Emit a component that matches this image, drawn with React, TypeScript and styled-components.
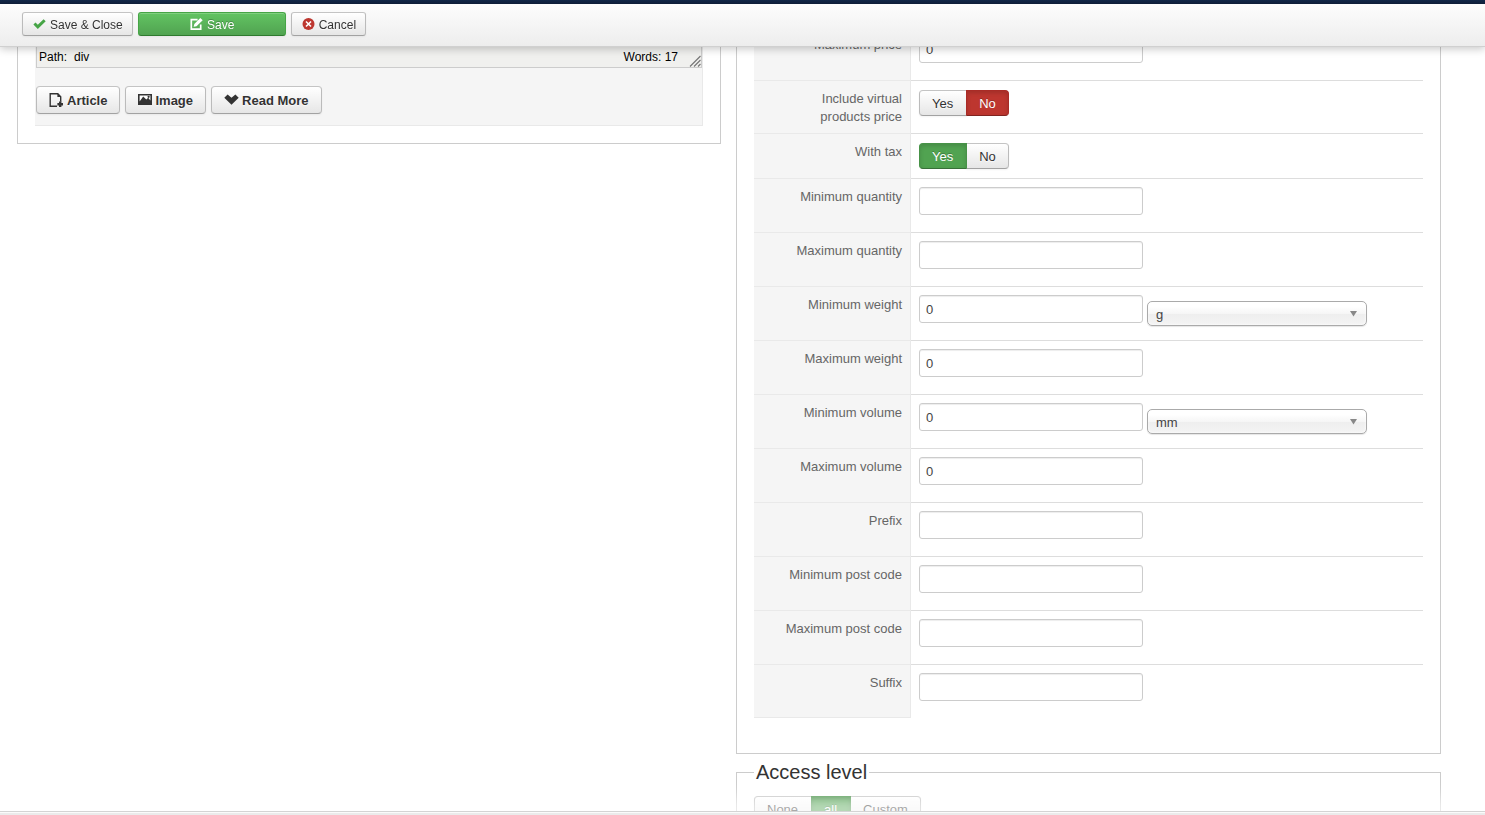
import React, { useState } from "react";
import styled, { createGlobalStyle, css } from "styled-components";

const GlobalStyle = createGlobalStyle`
  *, *::before, *::after { box-sizing: border-box; }
  body {
    margin: 0;
    background: #fff;
    color: #333;
    font: 13px/18px "Helvetica Neue", "Liberation Sans", Arial, sans-serif;
  }
  button, input, select { font: inherit; color: inherit; margin: 0; }
`;

const Shell = styled.div`
  height: 100vh;
  overflow: hidden;
`;

const Header = styled.header`
  position: fixed;
  top: 0;
  left: 0;
  right: 0;
  z-index: 2;
`;

const NavStrip = styled.div`
  height: 4px;
  background: linear-gradient(#13294a, #10203c);
`;

const Toolbar = styled.div`
  display: flex;
  gap: 5px;
  padding: 8px 22px 10px;
  background: linear-gradient(#fdfdfd, #ededed);
  border-bottom: 1px solid #d0d0d0;
  box-shadow: 0 2px 8px rgba(0, 0, 0, 0.22);
`;

const buttonFace = css`
  border: 1px solid #bbb;
  border-color: #c4c4c4 #bbb #a2a2a2;
  border-radius: 4px;
  background: linear-gradient(#fff, #e6e6e6);
  box-shadow: inset 0 1px 0 rgba(255, 255, 255, 0.2), 0 1px 2px rgba(0, 0, 0, 0.05);
  text-shadow: 0 1px 1px rgba(255, 255, 255, 0.75);
`;

const ToolButton = styled.button<{ $primary?: boolean }>`
  ${buttonFace}
  display: flex;
  align-items: center;
  justify-content: center;
  gap: 4px;
  height: 24px;
  padding: 1px 9px 0 10px;
  border-radius: 3px;
  font-size: 12px;
  ${(p) =>
    p.$primary &&
    css`
      width: 148px;
      color: #fff;
      border-color: #46a546 #46a546 #2f7a2f;
      background: linear-gradient(#62c462, #51a351);
      text-shadow: 0 -1px 0 rgba(0, 0, 0, 0.25);
    `}
`;

const EditorButton = styled.button`
  ${buttonFace}
  display: flex;
  align-items: center;
  gap: 3px;
  height: 28px;
  padding: 1px 12px 0;
  font-weight: bold;
`;

const Columns = styled.main`
  display: grid;
  grid-template-columns: minmax(0, 704fr) minmax(0, 705fr);
  align-items: start;
  gap: 15px;
  padding: 4px 44px 0 17px;
`;

const EditorBox = styled.section`
  padding: 42px 17px 17px;
  border: 1px solid #ccc;
  border-top: 0;
`;

const EditorPanel = styled.div`
  background: #f5f5f5;
  border-right: 1px solid #e9e9e9;
  border-bottom: 1px solid #e9e9e9;
  padding-left: 1px;
`;

const EditorStatus = styled.div`
  position: relative;
  display: flex;
  justify-content: space-between;
  height: 22px;
  padding: 2px 23px 0 2px;
  border: 1px solid #ccc;
  border-top: 0;
  background: #f0f0ee;
  color: #000;
  font-size: 12px;
`;

const PathName = styled.span`
  margin-left: 7px;
`;

const Grip = styled.svg`
  position: absolute;
  right: 0;
  bottom: 0;
`;

const EditorButtons = styled.div`
  display: flex;
  gap: 5px;
  padding: 18px 0 11px;
`;

const Restrictions = styled.section`
  padding: 22px 17px 35px;
  border: 1px solid #ccc;
  border-top: 0;
`;

const Row = styled.div`
  display: grid;
  grid-template-columns: 157px minmax(0, 1fr);
`;

const Key = styled.div`
  padding: 9px 8px 7px 24px;
  border-top: 1px solid #e9e9e9;
  border-right: 1px solid #e9e9e9;
  background: #f5f5f5;
  color: #666;
  text-align: right;

  ${Row}:last-child > & {
    border-bottom: 1px solid #e9e9e9;
  }
`;

const Value = styled.div`
  display: flex;
  align-items: flex-start;
  gap: 4px;
  padding: 8px;
  border-top: 1px solid #ddd;
`;

const TextInput = styled.input`
  width: 224px;
  height: 28px;
  margin-bottom: 9px;
  padding: 4px 6px;
  border: 1px solid #ccc;
  border-radius: 3px;
  background: #fff;
  box-shadow: inset 0 1px 1px rgba(0, 0, 0, 0.075);
  color: #444;
`;

const SelectWrap = styled.div`
  position: relative;
  width: 220px;
  margin-top: 6px;
`;

const Select = styled.select`
  appearance: none;
  display: block;
  width: 100%;
  height: 25px;
  padding: 2px 24px 0 8px;
  border: 1px solid #aaa;
  border-radius: 5px;
  background: linear-gradient(#fff 20%, #f6f6f6 50%, #eee 52%, #f4f4f4 100%);
  box-shadow: inset 0 0 3px #fff, 0 1px 1px rgba(0, 0, 0, 0.1);
  color: #444;
`;

const Arrow = styled.svg`
  position: absolute;
  top: 10px;
  right: 10px;
  pointer-events: none;
`;

const Segments = styled.div`
  display: flex;
  margin: 1px 0;
`;

const HiddenRadio = styled.input`
  position: absolute;
  opacity: 0;
  pointer-events: none;
`;

const tones = {
  green: css`
    border-color: #479247 #479247 #387038;
    background: #51a351;
  `,
  red: css`
    border-color: #a92b26 #a92b26 #802420;
    background: #bd362f;
  `,
};

const Segment = styled.label<{ $tone?: "green" | "red" }>`
  ${buttonFace}
  position: relative;
  height: 26px;
  padding: 4px 13px 2px 12px;
  border-radius: 0;
  cursor: pointer;

  & + & { margin-left: -1px; }
  &:first-child { border-radius: 4px 0 0 4px; }
  &:last-child {
    padding-right: 12px;
    border-radius: 0 4px 4px 0;
  }

  ${(p) =>
    p.$tone &&
    css`
      ${tones[p.$tone]}
      z-index: 1;
      color: #fff;
      text-shadow: 0 -1px 0 rgba(0, 0, 0, 0.25);
      box-shadow: inset 0 2px 4px rgba(0, 0, 0, 0.15);
    `}
`;

const AccessBox = styled.fieldset`
  min-width: 0;
  margin: 8px 0 0;
  padding: 13px 17px 30px;
  border: 1px solid #ccc;
`;

const Legend = styled.legend`
  padding: 0 2px;
  font-size: 20px;
  line-height: 20px;
`;

const StatusBar = styled.footer`
  position: fixed;
  left: 0;
  right: 0;
  bottom: -26px;
  z-index: 2;
  height: 30px;
  border-top: 1px solid #d4d4d4;
  background: #ebebeb;
  box-shadow: inset 0 1px 0 rgba(255, 255, 255, 0.8), 0 -15px 15px rgba(255, 255, 255, 0.6);
`;

const CheckIcon = () => (
  <svg width="13" height="12" viewBox="0 0 13 12" aria-hidden="true">
    <path d="M.4 5.4 2.5 3.4 4.8 5.7 10.6.2 12.7 2.3 4.8 10Z" fill="#46a546" />
  </svg>
);

const EditIcon = () => (
  <svg width="13" height="13" viewBox="0 0 13 13" fill="none" aria-hidden="true">
    <path d="M7.6 1.6H1.3v9.6h9.4V6.6" stroke="#fff" strokeWidth="1.7" />
    <path d="M3.6 8.8 4.3 6 10.3 0l2.4 2.3-6.2 6Z" fill="#fff" />
  </svg>
);

const CancelIcon = () => (
  <svg width="13" height="13" viewBox="0 0 13 13" aria-hidden="true">
    <circle cx="6.5" cy="6" r="6" fill="#bd362f" />
    <path d="m4 3.5 5 5m0-5-5 5" stroke="#fff" strokeWidth="1.6" />
  </svg>
);

const ArticleIcon = () => (
  <svg width="15" height="15" viewBox="0 0 15 15" fill="none" aria-hidden="true">
    <path d="M8 13.2H1.2V.7h7.6l2.9 3v5" stroke="#333" strokeWidth="1.4" />
    <path d="M8.4.3v3.8h3.8Z" fill="#333" />
    <path d="M11.2 8.4v5.6M8.4 11.2H14" stroke="#333" strokeWidth="2.4" />
  </svg>
);

const ImageIcon = () => (
  <svg width="14" height="15" viewBox="0 0 14 15" aria-hidden="true">
    <path d="M0 1h14v11H0Z" fill="#333" />
    <path d="M1.6 2.5h10.8v5L10.2 4.8 8.3 6.6 5.2 3.4 1.6 8.6Z" fill="#fff" />
    <circle cx="10.6" cy="3.8" r="1.1" fill="#333" />
  </svg>
);

const ChevronIcon = () => (
  <svg width="15" height="15" viewBox="0 0 15 15" aria-hidden="true">
    <path d="M.3 4.8 3.6 1.4l3.9 3.4 3.9-3.4 3.3 3.4-7.2 7Z" fill="#333" />
  </svg>
);

interface Option {
  label: string;
  tone?: "green" | "red";
}

function Toggle({ name, options, initial }: { name: string; options: Option[]; initial: string }) {
  const [value, setValue] = useState(initial);
  return (
    <Segments role="radiogroup" aria-label={name}>
      {options.map((o) => (
        <Segment key={o.label} $tone={value === o.label ? o.tone : undefined}>
          <HiddenRadio
            type="radio"
            name={name}
            checked={value === o.label}
            onChange={() => setValue(o.label)}
          />
          {o.label}
        </Segment>
      ))}
    </Segments>
  );
}

const yesNo: Option[] = [
  { label: "Yes", tone: "green" },
  { label: "No", tone: "red" },
];

const accessOptions: Option[] = [
  { label: "None", tone: "red" },
  { label: "all", tone: "green" },
  { label: "Custom", tone: "green" },
];

interface Field {
  label: string;
  value?: string;
  choice?: string;
  units?: string[];
}

const fields: Field[] = [
  { label: "Maximum price", value: "0" },
  { label: "Include virtual products price", choice: "No" },
  { label: "With tax", choice: "Yes" },
  { label: "Minimum quantity" },
  { label: "Maximum quantity" },
  { label: "Minimum weight", value: "0", units: ["g", "kg"] },
  { label: "Maximum weight", value: "0" },
  { label: "Minimum volume", value: "0", units: ["mm", "cm", "m"] },
  { label: "Maximum volume", value: "0" },
  { label: "Prefix" },
  { label: "Minimum post code" },
  { label: "Maximum post code" },
  { label: "Suffix" },
];

function FieldRow({ label, value = "", choice, units }: Field) {
  const id = label.toLowerCase().replace(/ /g, "-");
  return (
    <Row>
      <Key>{choice ? label : <label htmlFor={id}>{label}</label>}</Key>
      <Value>
        {choice ? (
          <Toggle name={label} options={yesNo} initial={choice} />
        ) : (
          <TextInput id={id} type="text" defaultValue={value} />
        )}
        {units && (
          <SelectWrap>
            <Select aria-label={`${label} unit`}>
              {units.map((u) => (
                <option key={u}>{u}</option>
              ))}
            </Select>
            <Arrow width="7" height="6" viewBox="0 0 7 6" aria-hidden="true">
              <path d="M0 0h7L3.5 5.5Z" fill="#888" />
            </Arrow>
          </SelectWrap>
        )}
      </Value>
    </Row>
  );
}

export default function App() {
  return (
    <Shell>
      <GlobalStyle />
      <Header>
        <NavStrip />
        <Toolbar>
          <ToolButton type="button"><CheckIcon />Save &amp; Close</ToolButton>
          <ToolButton type="button" $primary><EditIcon />Save</ToolButton>
          <ToolButton type="button"><CancelIcon />Cancel</ToolButton>
        </Toolbar>
      </Header>
      <Columns>
        <EditorBox>
          <EditorPanel>
            <EditorStatus>
              <div>Path:<PathName>div</PathName></div>
              <div>Words: 17</div>
              <Grip width="12" height="12" viewBox="0 0 12 12" aria-hidden="true">
                <path d="M1 11.5 11.5 1M5 11.5 11.5 5M9 11.5 11.5 9" stroke="#777" strokeWidth="1.2" />
              </Grip>
            </EditorStatus>
            <EditorButtons>
              <EditorButton type="button"><ArticleIcon />Article</EditorButton>
              <EditorButton type="button"><ImageIcon />Image</EditorButton>
              <EditorButton type="button"><ChevronIcon />Read More</EditorButton>
            </EditorButtons>
          </EditorPanel>
        </EditorBox>
        <div>
          <Restrictions>
            {fields.map((f) => (
              <FieldRow key={f.label} {...f} />
            ))}
          </Restrictions>
          <AccessBox>
            <Legend>Access level</Legend>
            <Toggle name="Access level" options={accessOptions} initial="all" />
          </AccessBox>
        </div>
      </Columns>
      <StatusBar />
    </Shell>
  );
}
